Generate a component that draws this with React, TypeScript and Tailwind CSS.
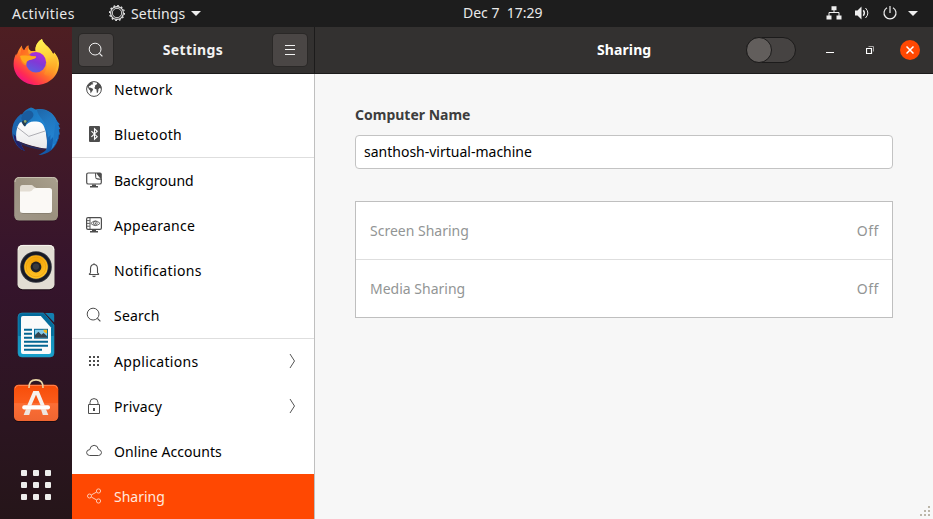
import type { ReactNode } from "react";

function Firefox() {
  return (
    <svg width="48" height="48" viewBox="0 0 48 48" className="overflow-visible">
      <defs>
        <linearGradient id="ffBody" x1="0.85" y1="0.1" x2="0.2" y2="0.95">
          <stop offset="0" stopColor="#fff04a" />
          <stop offset="0.35" stopColor="#ffb52a" />
          <stop offset="0.62" stopColor="#ff6a2c" />
          <stop offset="0.85" stopColor="#ff2a55" />
          <stop offset="1" stopColor="#f0108a" />
        </linearGradient>
        <linearGradient id="ffTail" x1="0.4" y1="0" x2="0.6" y2="1">
          <stop offset="0" stopColor="#fff352" />
          <stop offset="0.5" stopColor="#ffd038" />
          <stop offset="1" stopColor="#ff8a1e" stopOpacity="0.3" />
        </linearGradient>
        <linearGradient id="ffGlobe" x1="0.7" y1="0" x2="0.3" y2="1">
          <stop offset="0" stopColor="#b22ddb" />
          <stop offset="0.5" stopColor="#8139d6" />
          <stop offset="1" stopColor="#5b5fe0" />
        </linearGradient>
        <linearGradient id="ffFace" x1="0" y1="0" x2="1" y2="1">
          <stop offset="0" stopColor="#ff5a25" />
          <stop offset="1" stopColor="#ffa51c" />
        </linearGradient>
      </defs>
      <path d="M9.8 7.4C10 10.5 10.8 11.7 12.4 12.2C13.5 9.5 15 8 16.4 7.4C16.2 10 17 11.6 19 13L23.7 13C22.6 8.5 26 3 30 1C30.8 5 34.5 7 37.8 11C39.5 13 40.6 15 41.2 16.5L42.2 14.5C44.8 17 46.9 21 47 25C47.3 37.5 37 47 24.5 47C12 47 1.5 38 1.6 26C1.6 21 3 17.5 4.4 15.5L4.6 17.6C5.8 13.6 7.4 10 9.8 7.4Z" fill="url(#ffBody)" />
      <path d="M30 1C30.8 5 34.5 7 37.8 11C39.5 13 40.6 15 41.2 16.5L42.2 14.5C46 19 46.5 28 42.5 34C40 38 35 39 32 36C37 29 35 20 30 16.5C28 15 25.5 14.5 23.7 13C22.6 8.5 26 3 30 1Z" fill="url(#ffTail)" />
      <circle cx="23.9" cy="24.2" r="10.2" fill="url(#ffGlobe)" />
      <path d="M9.8 7.4C10 10.5 10.8 11.7 12.4 12.2C13.5 9.5 15 8 16.4 7.4C16 10 15.9 12.5 16.4 14.8C16.8 16.4 18 17.6 19.5 18L24 18.6C24.4 20 22.6 21 18.6 21.8C15.2 22.6 14 24 14.4 27.4C10.5 27 8 23 8 18Z" fill="url(#ffFace)" />
      <path d="M8 18C12 17 17 18.2 24 18.6C24.4 20 22.6 21 18.6 21.8C15.4 22.5 14 23.6 14.2 26C11.4 25 9 22.5 8 18Z" fill="#ffa91c" />
    </svg>
  );
}

function Thunderbird() {
  return (
    <svg width="48" height="48" viewBox="0 0 48 48" className="overflow-visible">
      <defs>
        <linearGradient id="tbBody" x1="0" y1="0" x2="0.8" y2="1">
          <stop offset="0" stopColor="#1a6fb4" />
          <stop offset="0.5" stopColor="#2085d2" />
          <stop offset="1" stopColor="#0f4c9c" />
        </linearGradient>
        <linearGradient id="tbWing" x1="0" y1="0" x2="0.3" y2="1">
          <stop offset="0" stopColor="#1e5fa0" />
          <stop offset="1" stopColor="#2896e6" />
        </linearGradient>
        <linearGradient id="tbMail" x1="0" y1="0" x2="0" y2="1">
          <stop offset="0" stopColor="#ffffff" />
          <stop offset="1" stopColor="#e8e8ea" />
        </linearGradient>
      </defs>
      <path d="M9 8C-1 15-2 28 3 36C5 40 8 43.5 13 45C10.6 42 9 39 8 34L9 18L13 10Z" fill="#1c66b0" />
      <path d="M1.5 28C2 36 6 42.5 13 45C10.6 42 9 39 8 35Z" fill="#20206b" />
      <path d="M8 16.5Q16 13 28 15L33.5 20.5L36 42.8C26 42 13 38 4.6 34.4C3.4 28 4.4 21 8 16.5Z" fill="url(#tbMail)" />
      <path d="M4.8 21L16.8 30.4L33.2 25" fill="none" stroke="#aeaeb4" strokeWidth="1" />
      <path d="M4.8 34.5C14 39 24 42.2 35.6 42.8L31 43.8C20 43 10 39.6 5.4 36Z" fill="#272a5c" />
      <path d="M19 1.5C21.6 1.8 22.2 3.4 24 3.4C33 1.6 41 6 44.5 14C49.5 24 48 37 39 44.5C35 47.5 31 48.8 26.5 49C31 46.8 34 45 34.6 42.6C35.6 36 34.6 28 33 23.6C32 20.4 31.6 19.4 30 17.6C27.4 15.6 25.6 15.6 22 15.6C18 15.6 15.4 17 13 20.5L10.5 17.5C6.4 14 10 6.8 14 4Q16.5 2 19 1.5Z" fill="url(#tbBody)" />
      <path d="M25 3.6C33 2 41 7 44 14C48 24 47 36 39 44C41 39 41 35 41 31L38.2 34L38.6 29L36 31.4C36 25 33.4 18 30 13.6C28 10.6 25 7 25 3.6Z" fill="url(#tbWing)" opacity="0.75" />
      <path d="M10 15C8 12 10 7 14.5 5C18 3.5 22 6 21.4 9.6C20.6 13.4 15.4 14.6 13 20Z" fill="#1a5c9e" />
      <path d="M44 14L48 18.4L46.2 18.8L48.3 23L46.4 23.2L47.9 28.6L45.8 28.4L46.4 33L43.8 32.8L44 37.5L40.5 38Z" fill="#1d77c5" />
      <path d="M10 15.4C11 14.5 14.5 14 16 15C14.5 16 14 18 13 20.6C11.5 19.5 10 17.5 10 15.4Z" fill="#263c51" />
      <circle cx="13.2" cy="15.4" r="1.3" fill="#8fae74" />
    </svg>
  );
}

function Files() {
  return (
    <svg width="48" height="48" viewBox="0 0 48 48" className="overflow-visible">
      <defs>
        <linearGradient id="flBg" x1="1" y1="0" x2="0" y2="1">
          <stop offset="0" stopColor="#aaa18e" />
          <stop offset="0.5" stopColor="#9b917f" />
          <stop offset="1" stopColor="#a1988a" />
        </linearGradient>
      </defs>
      <rect x="2.2" y="3.5" width="43.8" height="43.8" rx="5" fill="#1e0c19" opacity="0.6" />
      <rect x="2.2" y="3" width="43.8" height="43.6" rx="5" fill="url(#flBg)" />
      <path d="M3 8Q3 3.5 7.5 3.5H40.7Q45.2 3.5 45.2 8" fill="none" stroke="#c8c0b1" strokeWidth="1" />
      <path d="M8 14Q8 11 10.5 11H19.5C21.5 11 22 13.8 24 13.8V20H8Z" fill="#e3ddd3" />
      <path d="M8 17.5H17.5C20.5 17.5 20.8 14 24 14H37.4Q40 14 40 16.7V36.4Q40 39.3 37.2 39.3H10.8Q8 39.3 8 36.4Z" fill="#fbf9f6" />
      <path d="M8.6 38.4Q9.5 39.5 11 39.5H37Q38.8 39.5 39.6 38.4" fill="none" stroke="#776f5e" strokeWidth=".7" />
    </svg>
  );
}

function Rhythmbox() {
  return (
    <svg width="48" height="48" viewBox="0 0 48 48" className="overflow-visible">
      <defs>
        <radialGradient id="rbCone" cx="0.5" cy="0.3" r="0.7">
          <stop offset="0" stopColor="#f09b00" />
          <stop offset="1" stopColor="#ffc62b" />
        </radialGradient>
      </defs>
      <rect x="5.5" y="3.5" width="37" height="44.8" rx="5" fill="#1b0b16" />
      <rect x="5.5" y="2.9" width="37" height="44.3" rx="5" fill="#e2ddd3" />
      <path d="M6.3 8Q6.5 3.4 11 3.4H37Q41.5 3.4 41.8 8" fill="none" stroke="#f8f5ef" />
      <circle cx="24" cy="25" r="15.8" fill="#33353f" />
      <circle cx="24" cy="25" r="13.7" fill="none" stroke="#171923" strokeWidth="2.4" />
      <circle cx="24" cy="25" r="11.8" fill="url(#rbCone)" />
      <circle cx="24" cy="25" r="9.8" fill="none" stroke="#e99803" strokeWidth=".6" />
      <circle cx="24" cy="25" r="5.4" fill="#202126" />
      <circle cx="24" cy="24.6" r="3.1" fill="#393a3f" />
    </svg>
  );
}

function Writer() {
  return (
    <svg width="48" height="48" viewBox="0 0 48 48" className="overflow-visible">
      <defs>
        <linearGradient id="wrBg" x1="0" y1="0" x2="0" y2="1">
          <stop offset="0" stopColor="#03699b" />
          <stop offset="0.52" stopColor="#04719f" />
          <stop offset="0.53" stopColor="#1590bb" />
          <stop offset="1" stopColor="#16a0cb" />
        </linearGradient>
      </defs>
      <path d="M10 3H31.5L42 15V43Q42 47 38 47H10Q6 47 6 43V7Q6 3 10 3Z" fill="url(#wrBg)" stroke="#2296bd" strokeWidth=".6" />
      <path d="M33 3H40.3Q42.2 3 42.2 5V12.6Z" fill="#137fb0" />
      <path d="M10.8 6H28.8L39 17.4V42Q39 44 37 44H10.8Q9 44 9 42V8Q9 6 10.8 6Z" fill="#fafafa" />
      <path d="M12 19.7H20M12 23.7H20M12 27.7H20M12 31.8H36M12 35.8H36M12 39.8H30" stroke="#036592" strokeWidth="2" />
      <path d="M22 18.8H36V28.7H22Z" fill="#056894" />
      <path d="M23 19.8H35V27.7H23Z" fill="#83c9e8" />
      <path d="M23 27.7V25L26.4 21.8L29.4 24.7L31.5 23L35 26V27.7Z" fill="#34434c" />
      <path d="M31.3 19.8H35V23.3Q31.8 23 31.3 19.8Z" fill="#f4b61c" />
    </svg>
  );
}

function Software() {
  return (
    <svg width="48" height="48" viewBox="0 0 48 48" className="overflow-visible">
      <defs>
        <linearGradient id="swBg" x1="0" y1="0" x2="0" y2="1">
          <stop offset="0" stopColor="#f74d08" />
          <stop offset="0.5" stopColor="#fb5c1c" />
          <stop offset="0.52" stopColor="#fc6e35" />
          <stop offset="1" stopColor="#ef6531" />
        </linearGradient>
      </defs>
      <rect x="2" y="7.5" width="44.3" height="36.6" rx="4.5" fill="#1b0b12" />
      <rect x="2" y="6.8" width="44.3" height="36.2" rx="4.5" fill="url(#swBg)" />
      <path d="M3 10.4Q3.4 7.4 6.4 7.4H42Q45 7.4 45.3 10.4" fill="none" stroke="#ff8350" />
      <path d="M17 10C16.8 4.5 19 1.9 24 1.9S31.2 4.5 31 10" fill="none" stroke="#ead6a6" strokeWidth="1.6" />
      <path d="M21.3 13H26.8L32.8 27.6H28.7L24 16.7L19.3 27.6H15.2Z" fill="#f6f1ee" />
      <path d="M14 31.3H19L17.2 37H11.6ZM29 31.3H34L36.4 37H30.8Z" fill="#eee5e0" />
      <rect x="10.2" y="27.3" width="27.8" height="4.3" rx="2" fill="#fff" />
    </svg>
  );
}

function SearchIcon() {
  return (
    <svg width="16" height="16" viewBox="0 0 16 16" fill="none" stroke="currentColor">
      <circle cx="7.1" cy="7.1" r="5.9" strokeWidth="1" />
      <path d="M11.4 11.4L14.4 14.4" strokeWidth="1.2" />
    </svg>
  );
}

const icons: Record<string, ReactNode> = {
  network: (
    <>
      <circle cx="8" cy="8" r="7.4" stroke="currentColor" strokeWidth="1" fill="none" />
      <path fill="currentColor" d="M1 6.2C1.8 3 4 1 7 .8L6.3 2L7.4 3L6.3 3.6L5.4 3.4L4.6 4.6L2.8 5.2L3 6.4L4.8 6.8L7.2 8L6.4 10L5.4 11L5 12.6L4.4 11.6L4.2 9.6L2.8 8.2L2.2 6.6ZM9.4 1.2L11.2 2.2L10.6 3.6L9.2 4.3L9 5.9L8.4 6.8L9 8L10.4 8.3L10.9 12.2L11.8 11.6L12.4 9.8L12.3 8.4L13.5 7L14.8 7.6L15.5 7.1C15.2 3.6 12.9 1.4 9.4 1.2Z" />
    </>
  ),
  bluetooth: (
    <>
      <rect x="3" y="0" width="11" height="16" rx="1" fill="currentColor" />
      <path d="M5.4 5.2L11.2 10.7L8.5 13.2V2.8L11.2 5.3L5.4 10.8" stroke="white" strokeWidth="1.1" fill="none" />
    </>
  ),
  background: (
    <>
      <path d="M9 1H2.4Q.7 1 .7 2.6V10.4Q.7 12 2.4 12H13.6Q15.3 12 15.3 10.4V7" stroke="currentColor" strokeWidth="1.2" fill="none" />
      <path d="M9 .5H14Q15.8.5 15.8 2.3V7.5Q11.6 8.4 9.5 6.6Q9 5 9 .5Z" fill="currentColor" />
      <path d="M10 1L14.6 6.8L10.3 6Z" fill="white" />
      <path d="M6 12.5H10V14H12V15.5H4V14H6Z" fill="currentColor" />
    </>
  ),
  appearance: (
    <>
      <rect x=".6" y=".7" width="14.8" height="11.6" rx="1.4" stroke="currentColor" strokeWidth="1.2" fill="none" />
      <path d="M4 1V12M1 3.6H3.8M1 6.4H3.8M1 9.2H3.8" stroke="currentColor" strokeWidth=".9" />
      <path d="M4.8 6.4Q9.4 1.4 14 6.4Q9.4 10.8 4.8 6.4Z" fill="none" stroke="currentColor" strokeWidth=".8" />
      <circle cx="9.3" cy="6.2" r="1.9" fill="none" stroke="currentColor" strokeWidth=".8" />
      <path d="M8.8 5.4H9.8V7.2H8.8Z" fill="currentColor" />
      <path d="M6 12.5H10V14H12V15.5H4V14H6Z" fill="currentColor" />
    </>
  ),
  notifications: (
    <>
      <path d="M2.9 12.5H13.1M4.5 10.8V6.8Q4.5 2.5 8 2.5T11.5 6.8V10.8L13 12.4M4.5 10.8L3 12.4M8 1.2V2.5" stroke="currentColor" strokeWidth="1.1" fill="none" />
      <path d="M6 13.8H10Q9.5 15.2 8 15.2T6 13.8Z" fill="currentColor" />
    </>
  ),
  applications: (
    <path fill="currentColor" d="M3 3h2v2H3zM7 3h2v2H7zM11 3h2v2h-2zM3 7h2v2H3zM7 7h2v2H7zM11 7h2v2h-2zM3 11h2v2H3zM7 11h2v2H7zM11 11h2v2h-2z" />
  ),
  privacy: (
    <>
      <path d="M2.5 6.5H13.5V15.5H2.5ZM4 6.5V4.5Q4 .6 8 .6T12 4.5V6.5" stroke="currentColor" fill="none" />
      <rect x="7" y="10" width="2" height="3" fill="currentColor" />
    </>
  ),
  online: (
    <path d="M3.6 12.5Q.6 12.2.6 9.5Q.7 6.8 3.8 6.6Q4.2 2.6 8.1 2.3Q11.9 2.4 12.4 6.4Q15.3 6.9 15.5 9.6Q15.3 12.3 12.6 12.5Z" stroke="currentColor" fill="none" />
  ),
  sharing: (
    <g stroke="currentColor" fill="none">
      <circle cx="3.5" cy="8" r="2" />
      <circle cx="12.5" cy="3" r="2.1" />
      <circle cx="12.5" cy="13" r="2.1" />
      <path d="M5.4 6.9L10.5 4.1M5.4 9.1L10.5 11.9" />
    </g>
  ),
};

function Row({ icon, label, tracking = "", chevron, active, divided }: { icon: string; label: string; tracking?: string; chevron?: boolean; active?: boolean; divided?: boolean }) {
  return (
    <div className={`flex shrink-0 items-center pl-3.5 pr-[17px] ${divided ? "h-[46px] border-t border-[#dedede]" : "h-[45px]"} ${active ? "bg-[#ff4802] text-[#ffe9df]" : "text-black"}`}>
      <span className={`-mt-px ${active ? "text-[#ffc9b2]" : "text-[#4d4d4d]"}`}>
        {icon === "search" ? <SearchIcon /> : <svg width="16" height="16" viewBox="0 0 16 16">{icons[icon]}</svg>}
      </span>
      <span className={`ml-3 flex-1 whitespace-nowrap ${tracking}`}>{label}</span>
      {chevron && (
        <svg className="-mt-px" width="10" height="18" viewBox="0 0 10 18" fill="none" stroke="#555">
          <path d="M3 2L7.5 9L3 16" />
        </svg>
      )}
    </div>
  );
}

function SharingRow({ label }: { label: string }) {
  return (
    <div className="flex h-[57px] items-center justify-between px-3.5 text-[#929595]">
      <span>{label}</span>
      <span className="-mr-px tracking-[0.6px]">Off</span>
    </div>
  );
}

function TopBar() {
  return (
    <header className="grid h-[27px] shrink-0 grid-cols-[463px_1fr_auto] items-center bg-[#1d1d1d] text-[#e9e9e9]">
      <div className="flex items-center pl-3">
        <span className="w-[97px] tracking-[0.45px]">Activities</span>
        <svg className="-mt-px" width="16" height="16" viewBox="0 0 16 16" fill="none" stroke="#e8e8e8">
          <circle cx="8" cy="8" r="4.7" strokeWidth=".9" />
          <circle cx="8" cy="8" r="6.4" strokeWidth="1.1" />
          <circle cx="8" cy="8" r="7.4" strokeWidth="1.2" strokeDasharray="1.8 2.07" />
        </svg>
        <span className="ml-1.5 w-[60px] tracking-[0.15px]">Settings</span>
        <svg width="10" height="5" viewBox="0 0 10 5"><path d="M0 0H10L5 5Z" fill="#eee" /></svg>
      </div>
      <span className="-mt-px whitespace-pre">Dec 7  17:29</span>
      <div className="flex items-center pr-[15px] text-[#eee]">
        <svg className="-mt-px" width="16" height="16" viewBox="0 0 16 16" fill="currentColor">
          <path d="M5.5 1.2h5v4h-5zM.5 10.5h5v4h-5zM10.5 10.5h5v4h-5z" />
          <path d="M8 5V7.5M3 11V7.5H13V11" fill="none" stroke="currentColor" />
        </svg>
        <svg className="-mt-px ml-3" width="16" height="16" viewBox="0 0 16 16" fill="none" stroke="currentColor">
          <path d="M1 5.5H3.5L7.5 1.5V14.5L3.5 10.5H1Z" fill="currentColor" stroke="none" />
          <path d="M9.3 5.2Q11.5 8 9.3 10.8" strokeWidth="1.4" />
          <path d="M11.5 3Q16.2 8 11.5 13" strokeWidth="1" />
        </svg>
        <svg className="-mt-px ml-3" width="16" height="16" viewBox="0 0 16 16" fill="none" stroke="currentColor">
          <path d="M5 2.7A6 6 0 1 0 11 2.7" strokeWidth="1.2" />
          <path d="M8 1V8" strokeWidth="1.2" />
        </svg>
        <svg className="ml-2.5" width="10" height="5" viewBox="0 0 10 5"><path d="M0 0H10L5 5Z" fill="currentColor" /></svg>
      </div>
    </header>
  );
}

export default function App() {
  return (
    <div className="flex h-[519px] w-[933px] flex-col overflow-hidden bg-[#f7f7f7] font-['Noto_Sans','Open_Sans',sans-serif] text-[14px] leading-5">
      <TopBar />
      <div className="flex min-h-0 flex-1">
        <aside className="flex w-[72px] shrink-0 flex-col items-center gap-5 bg-linear-to-b from-[#4e1e22] via-[#35142c] to-[#251519] pt-[11px]">
          <Firefox />
          <Thunderbird />
          <Files />
          <Rhythmbox />
          <Writer />
          <Software />
          <div className="mt-6 grid grid-cols-[repeat(3,6px)] gap-1.5">
            {Array.from({ length: 9 }, (_, i) => (
              <span key={i} className="size-1.5 rounded-[1px] bg-[#eeeeec]" />
            ))}
          </div>
        </aside>
        <section className="flex w-[243px] shrink-0 flex-col border-r border-[#bfbfbf] bg-white">
          <div className="-mr-px flex h-[47px] shrink-0 items-center justify-between border-b border-r border-[#1c1b1b] bg-[#333130] px-[7px] text-[#f2f2f2]">
            <div className="flex h-8 w-[34px] items-center justify-center rounded bg-[#4a4645] shadow-[0_0_0_1px_#2a2827]"><SearchIcon /></div>
            <h1 className="font-bold tracking-[0.4px]">Settings</h1>
            <div className="flex h-8 w-[34px] items-center justify-center rounded bg-[#4a4645] shadow-[0_0_0_1px_#2a2827]">
              <svg width="10" height="10" viewBox="0 0 10 10"><path d="M0 .5H10M0 4.5H10M0 9.5H10" stroke="#f2f2f2" /></svg>
            </div>
          </div>
          <nav className="flex min-h-0 flex-1 flex-col justify-end overflow-hidden">
            <Row icon="network" label="Network" tracking="tracking-[0.35px]" />
            <Row icon="bluetooth" label="Bluetooth" tracking="tracking-[0.35px]" />
            <Row icon="background" label="Background" divided />
            <Row icon="appearance" label="Appearance" tracking="tracking-[0.25px]" />
            <Row icon="notifications" label="Notifications" tracking="tracking-[0.35px]" />
            <Row icon="search" label="Search" tracking="tracking-[0.2px]" />
            <Row icon="applications" label="Applications" tracking="tracking-[0.35px]" chevron divided />
            <Row icon="privacy" label="Privacy" tracking="tracking-[0.2px]" chevron />
            <Row icon="online" label="Online Accounts" tracking="tracking-[0.06px]" />
            <Row icon="sharing" label="Sharing" active />
          </nav>
        </section>
        <main className="flex min-w-0 flex-1 flex-col">
          <div className="flex h-[47px] shrink-0 items-center border-b border-[#1c1b1b] bg-[#333130] pl-[282px] text-white">
            <h2 className="w-[149px] font-bold tracking-[0.1px]">Sharing</h2>
            <div className="h-[26px] w-[50px] rounded-full border border-[#1c1b1b] bg-[#464342]">
              <div className="-ml-px -mt-px size-[26px] rounded-full border border-[#1c1b1b] bg-[#625e5c]" />
            </div>
            <svg className="ml-[30px]" width="8" height="16" viewBox="0 0 8 16"><path d="M0 10.5H8" stroke="white" /></svg>
            <svg className="ml-8" width="8" height="16" viewBox="0 0 8 16" fill="none">
              <path d="M2.5 4.5H7.5V9.5" stroke="#a8a6a5" />
              <path d="M.5 6.5H5.5V11.5H.5Z" stroke="white" strokeWidth="1.2" />
            </svg>
            <div className="ml-[26px] flex size-5 items-center justify-center rounded-full bg-[#ff4802]">
              <svg width="8" height="8" viewBox="0 0 8 8"><path d="M.5 .5L7.5 7.5M7.5 .5L.5 7.5" stroke="white" strokeWidth="1.5" /></svg>
            </div>
          </div>
          <div className="flex flex-1 flex-col px-10 pt-[31px]">
            <h3 className="font-bold text-[#3d3d3d]">Computer Name</h3>
            <div className="mt-2.5 flex h-[34px] items-center rounded border border-[#c3c3c3] bg-white px-2 text-black">santhosh-virtual-machine</div>
            <div className="mt-8 border border-[#bfbfbf] bg-white">
              <SharingRow label="Screen Sharing" />
              <div className="h-px bg-[#dedede]" />
              <SharingRow label="Media Sharing" />
            </div>
          </div>
          <svg className="mb-[3px] mr-[3px] self-end" width="10" height="10" viewBox="0 0 10 10" fill="#bcb6a9">
            <path d="M8 0h2v2H8zM4 4h2v2H4zM8 4h2v2H8zM0 8h2v2H0zM4 8h2v2H4zM8 8h2v2H8z" />
          </svg>
        </main>
      </div>
    </div>
  );
}
